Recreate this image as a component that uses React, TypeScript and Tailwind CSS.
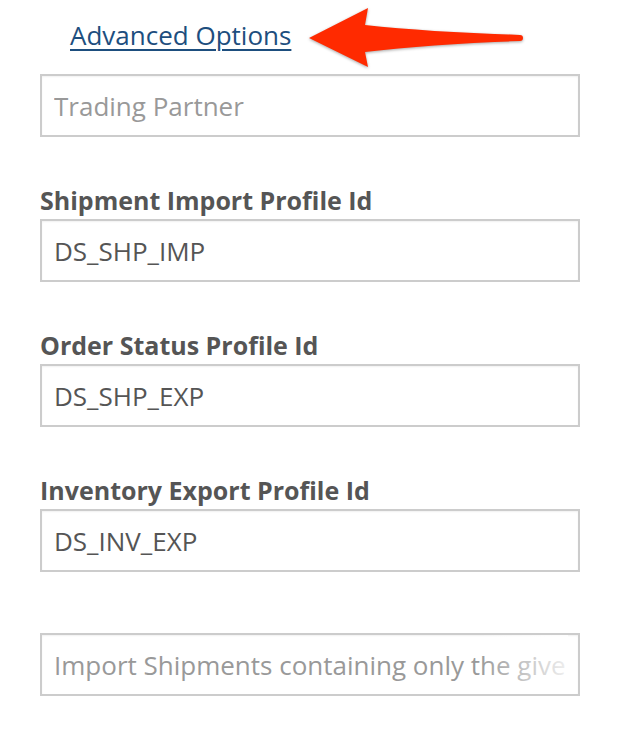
import React from 'react';

type Field = {
  label?: string;
  value?: string;
  placeholder?: string;
  fade?: boolean;
};

const fields: Field[] = [
  { placeholder: 'Trading Partner' },
  { label: 'Shipment Import Profile Id', value: 'DS_SHP_IMP' },
  { label: 'Order Status Profile Id', value: 'DS_SHP_EXP' },
  { label: 'Inventory Export Profile Id', value: 'DS_INV_EXP' },
  { placeholder: 'Import Shipments containing only the given Shipping Method', fade: true },
];

function TextBox({ value, placeholder, fade }: Field) {
  return (
    <div className="relative w-[540px]">
      <input
        type="text"
        defaultValue={value}
        placeholder={placeholder}
        readOnly
        className="block w-full h-[63px] border-2 border-[#cccccc] bg-white pl-[12px] pr-[12px] text-[26px] text-[#555555] placeholder:text-[#999999] shadow-[inset_0_1px_2px_rgba(0,0,0,0.06)] outline-none"
      />
      {fade && (
        <div className="absolute top-[2px] bottom-[2px] right-[12px] w-[90px] bg-gradient-to-l from-white/85 to-white/0 pointer-events-none" />
      )}
    </div>
  );
}

function Arrow() {
  return (
    <svg
      className="absolute left-[300px] top-0 drop-shadow-[0_1px_1.5px_rgba(0,0,0,0.35)]"
      width="230"
      height="75"
      viewBox="300 0 230 75"
    >
      <path
        d="M309 38 L368 8 L365 25 Q430 32 520 35 A3 3 0 0 1 520 41 Q430 44 365 52 L368 67 Z"
        fill="#ff2a00"
      />
    </svg>
  );
}

export default function App() {
  return (
    <div className="relative min-h-[736px] bg-white font-['Open_Sans',sans-serif]">
      <Arrow />
      <div className="pl-10 pt-[17px]">
        {/* Advanced options link */}
        <div className="pl-[30px] h-9">
          <a
            href="#"
            className="text-[26px] leading-9 text-[#1d4e7e] underline decoration-2 underline-offset-[4px]"
          >
            Advanced Options
          </a>
        </div>

        <div className="mt-[21px]">
          <TextBox {...fields[0]} />
        </div>

        {fields.slice(1, 4).map((f) => (
          <div key={f.label} className="mt-[45px]">
            <label className="block text-[25px] leading-9 font-bold text-[#555555]">{f.label}</label>
            <div className="mt-px">
              <TextBox {...f} />
            </div>
          </div>
        ))}

        <div className="mt-[61px]">
          <TextBox {...fields[4]} />
        </div>
      </div>
    </div>
  );
}
